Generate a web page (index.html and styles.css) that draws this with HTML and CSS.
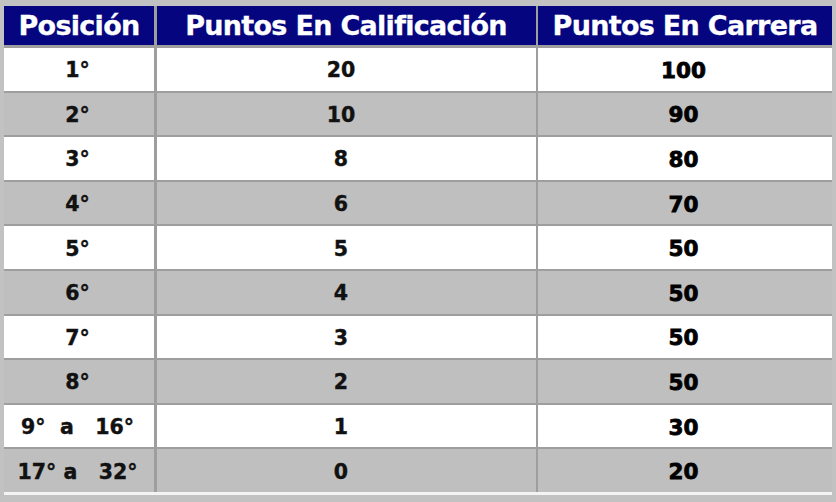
FILE: index.html
```html
<!DOCTYPE html>
<html lang="es">
<head>
<meta charset="utf-8">
<title>Puntos</title>
<link rel="stylesheet" href="styles.css">
</head>
<body>
<div class="table">
  <div class="cell head">Posición</div>
  <div class="cell head">Puntos En Calificación</div>
  <div class="cell head">Puntos En Carrera</div>

  <div class="cell w">1°</div><div class="cell w mid">20</div><div class="cell w big">100</div>
  <div class="cell g">2°</div><div class="cell g mid">10</div><div class="cell g big">90</div>
  <div class="cell w">3°</div><div class="cell w mid">8</div><div class="cell w big">80</div>
  <div class="cell g">4°</div><div class="cell g mid">6</div><div class="cell g big">70</div>
  <div class="cell w">5°</div><div class="cell w mid">5</div><div class="cell w big">50</div>
  <div class="cell g">6°</div><div class="cell g mid">4</div><div class="cell g big">50</div>
  <div class="cell w">7°</div><div class="cell w mid">3</div><div class="cell w big">50</div>
  <div class="cell g">8°</div><div class="cell g mid">2</div><div class="cell g big">50</div>
  <div class="cell w pre">9°  a   16°</div><div class="cell w mid">1</div><div class="cell w big">30</div>
  <div class="cell g pre">17° a   32°</div><div class="cell g mid">0</div><div class="cell g big">20</div>
</div>
</body>
</html>
```

FILE: styles.css
```css
html, body {
  margin: 0;
  padding: 0;
  background: #c2c2c2;
  width: 836px;
  height: 502px;
  overflow: hidden;
}
body {
  padding: 6px 0 0 4px;
  box-sizing: border-box;
}
.table {
  display: grid;
  grid-template-columns: 150px 379px 294px;
  grid-template-rows: 40px repeat(10, 42.6px);
  column-gap: 2.5px;
  row-gap: 2px;
  background: #9e9e9e;
  width: 828px;
  font-family: "DejaVu Sans", Verdana, sans-serif;
  font-weight: bold;
  box-shadow: 0 3px 0 #f4f4f4;
}
.table > .head:nth-child(-n+3) {
  margin-bottom: 1px;
}
.cell {
  display: flex;
  align-items: center;
  justify-content: center;
  color: #111;
  font-size: 20.5px;
  -webkit-text-stroke: 0.4px #111;
  padding-top: 2px;
  padding-right: 3px;
}
.head {
  background: #050580;
  color: #fff;
  font-size: 27px;
  letter-spacing: -0.7px;
  -webkit-text-stroke: 0.3px #fff;
  padding-top: 0;
  padding-right: 0;
}
.w { background: #ffffff; }
.g { background: #bfbfbf; }
.mid { padding-right: 10px; }
.big { font-size: 21.5px; color: #000; -webkit-text-stroke: 0.8px #000; }
.pre { white-space: pre; }
```
